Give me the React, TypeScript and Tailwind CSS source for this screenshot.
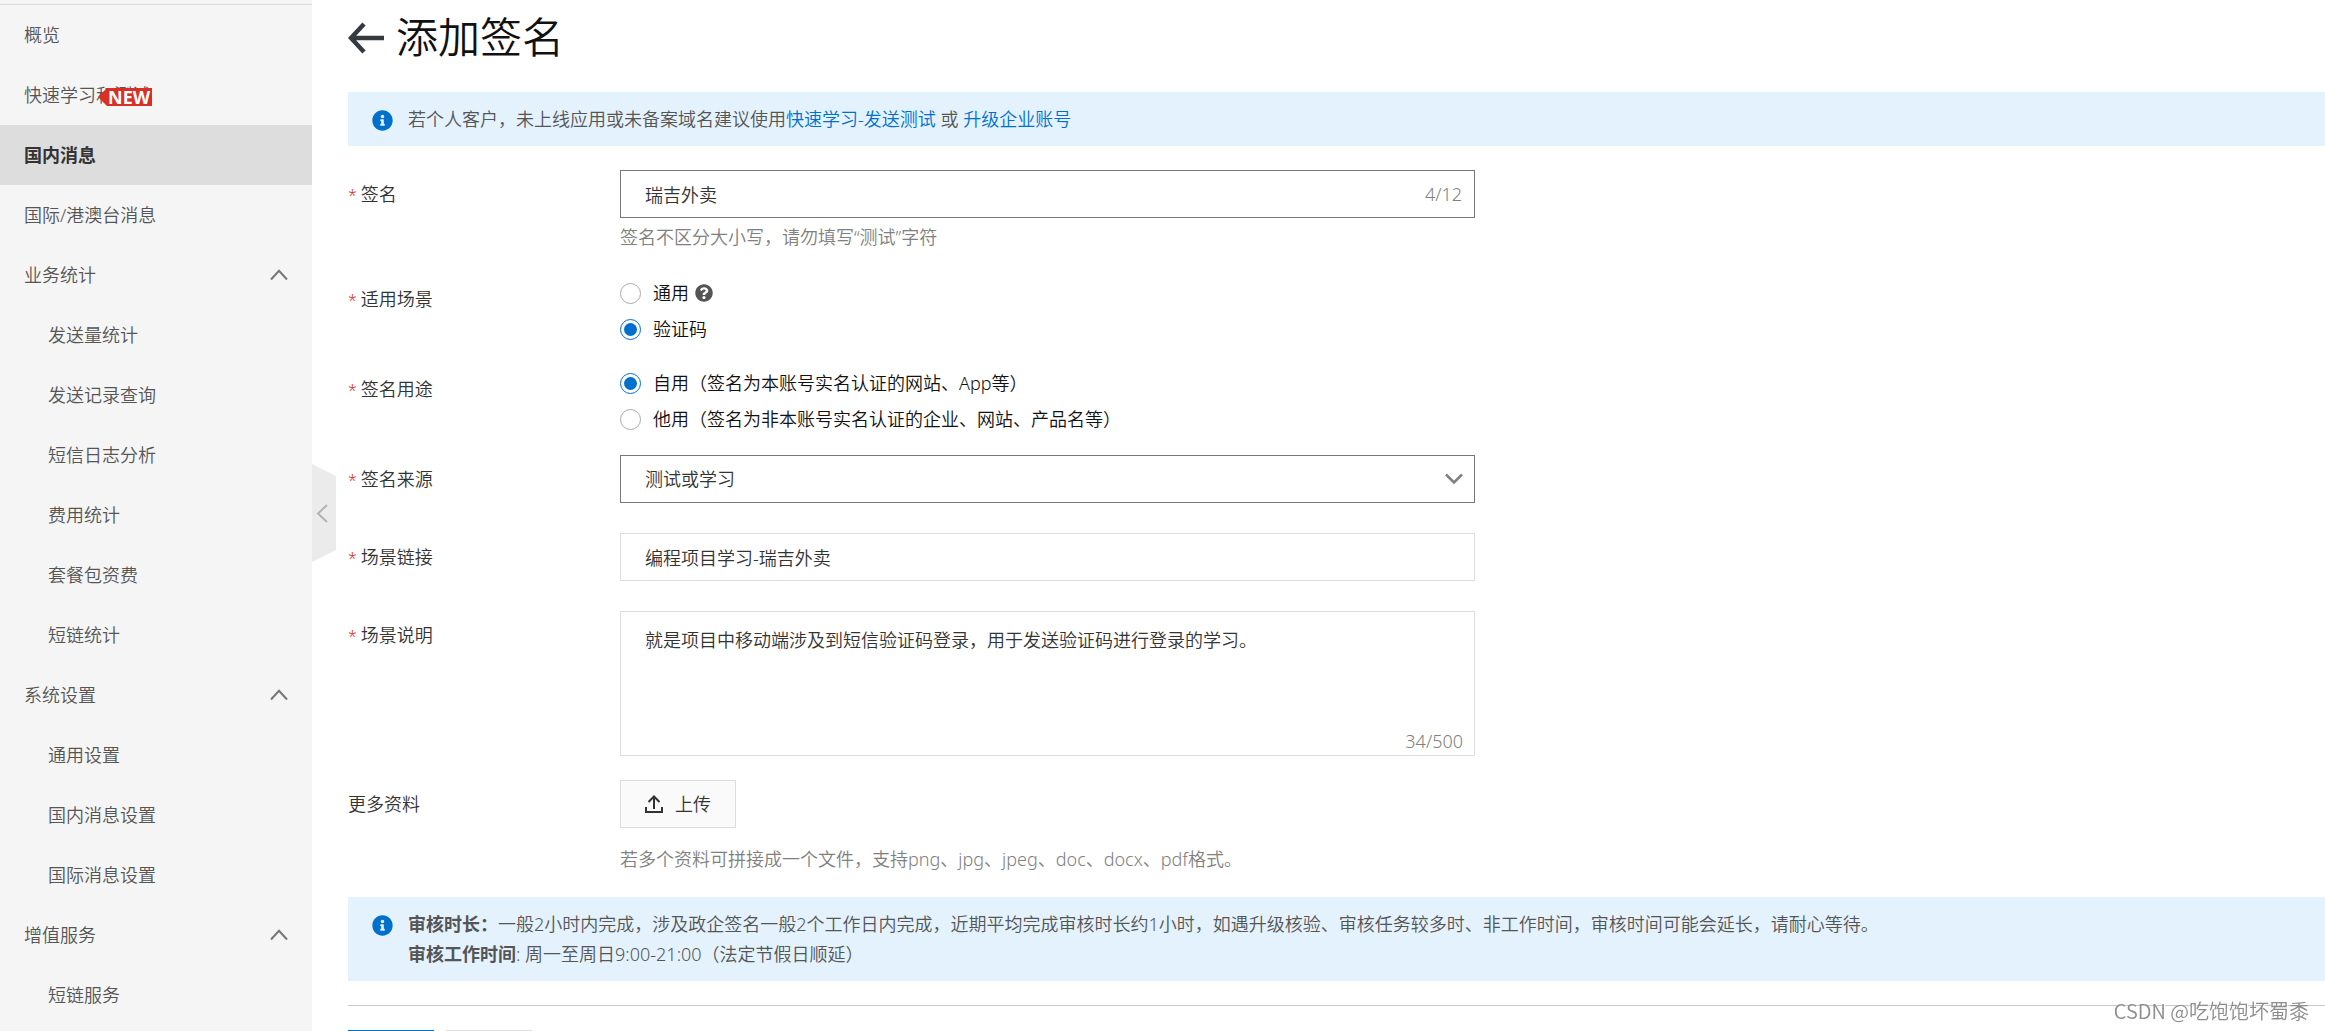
import React, { useState } from "react";
import { FaInfoCircle, FaQuestionCircle } from "react-icons/fa";

type NavEntry = {
  label: string;
  active?: boolean;
  badge?: boolean;
  children?: string[];
};

const NAV: NavEntry[] = [
  { label: "概览" },
  { label: "快速学习和测试", badge: true },
  { label: "国内消息", active: true },
  { label: "国际/港澳台消息" },
  {
    label: "业务统计",
    children: ["发送量统计", "发送记录查询", "短信日志分析", "费用统计", "套餐包资费", "短链统计"],
  },
  { label: "系统设置", children: ["通用设置", "国内消息设置", "国际消息设置"] },
  { label: "增值服务", children: ["短链服务"] },
];

function ChevronUp() {
  return (
    <svg width="18" height="12" viewBox="0 0 18 12" fill="none" stroke="#777" strokeWidth="2" aria-hidden="true">
      <path d="M1 10.5 9 1.8l8 8.7" />
    </svg>
  );
}

function NewBadge() {
  return (
    <span className="absolute left-[98px] top-[23px] flex">
      <svg width="10" height="18" viewBox="0 0 10 18" fill="#d93026" aria-hidden="true">
        <path d="M10 0H9L0 9l9 9h1z" />
      </svg>
      <span className="bg-[#d93026] pr-[2px] font-['Open_Sans','Noto_Sans_CJK_SC',sans-serif] text-lg font-bold leading-[18px] text-white">
        NEW
      </span>
    </span>
  );
}

function Sidebar() {
  return (
    <nav className="w-[312px] shrink-0 bg-[#f5f5f5] pt-1 text-[#555]" aria-label="主导航">
      <ul className="border-t border-[#d9d9d9]">
        {NAV.map((entry) => (
          <li key={entry.label}>
            {entry.children ? (
              <>
                <button type="button" className="flex h-[60px] w-full items-center justify-between px-6" aria-expanded="true">
                  {entry.label}
                  <ChevronUp />
                </button>
                <ul>
                  {entry.children.map((child) => (
                    <li key={child}>
                      <a href="#" className="flex h-[60px] items-center px-12">
                        {child}
                      </a>
                    </li>
                  ))}
                </ul>
              </>
            ) : (
              <a
                href="#"
                className={
                  entry.active
                    ? "flex h-[60px] items-center bg-[#ddd] px-6 font-bold text-[#333]"
                    : "relative flex h-[60px] items-center px-6"
                }
              >
                {entry.label}
                {entry.badge && <NewBadge />}
              </a>
            )}
          </li>
        ))}
      </ul>
    </nav>
  );
}

function Notice({ children }: { children: React.ReactNode }) {
  return (
    <div className="flex gap-[15px] bg-[#e4f2fe] px-6 py-3 text-[#555]">
      <FaInfoCircle className="mt-[6px] size-[21px] shrink-0 text-[#0070cc]" aria-hidden="true" />
      <div className="leading-[30px]">{children}</div>
    </div>
  );
}

function Row({
  label,
  htmlFor,
  required = true,
  className,
  children,
}: {
  label: string;
  htmlFor?: string;
  required?: boolean;
  className: string;
  children: React.ReactNode;
}) {
  const inner = (
    <>
      {required && <span className="mr-1 text-base text-[#d93026]">*</span>}
      {label}
    </>
  );
  return (
    <div className={className}>
      {htmlFor ? (
        <label htmlFor={htmlFor} className="w-[272px] shrink-0 leading-[48px]">
          {inner}
        </label>
      ) : (
        <span className="w-[272px] shrink-0 leading-[48px]">{inner}</span>
      )}
      <div className="max-w-[855px] flex-1">{children}</div>
    </div>
  );
}

function Radio({
  name,
  checked,
  onSelect,
  children,
}: {
  name: string;
  checked: boolean;
  onSelect: () => void;
  children: React.ReactNode;
}) {
  return (
    <label className="flex h-9 items-center gap-3 text-[#111]">
      <input
        type="radio"
        name={name}
        checked={checked}
        onChange={onSelect}
        className="grid size-[21px] shrink-0 appearance-none place-content-center rounded-full border border-[#aaa] before:size-[13px] before:rounded-full checked:border-[#0070cc] checked:before:bg-[#0070cc]"
      />
      <span className="flex items-center gap-[6px]">{children}</span>
    </label>
  );
}

export default function App() {
  const [scene, setScene] = useState("code");
  const [usage, setUsage] = useState("self");
  const [sign, setSign] = useState("瑞吉外卖");
  const [link, setLink] = useState("编程项目学习-瑞吉外卖");
  const [desc, setDesc] = useState("就是项目中移动端涉及到短信验证码登录，用于发送验证码进行登录的学习。");

  return (
    <div className="flex h-screen overflow-hidden bg-white font-['Noto_Sans','Noto_Sans_CJK_SC',sans-serif] text-lg font-[350] text-[#333]">
      <Sidebar />
      <div className="relative w-0">
        <button type="button" aria-label="收起导航" className="absolute left-0 top-[464px]">
          <svg width="24" height="98" viewBox="0 0 24 98" aria-hidden="true">
            <path d="M0 0 24 12V86L0 98z" fill="#ebebeb" />
            <path d="M15 41 6 49.500 15 58" fill="none" stroke="#b3b3b3" strokeWidth="2" />
          </svg>
        </button>
      </div>

      <main className="min-w-0 flex-1 pl-9">
        <div className="flex h-[92px] items-start gap-3 pt-2">
          <a href="#" aria-label="返回" className="flex h-[60px] items-center">
            <svg width="36" height="32" viewBox="0 0 36 32" fill="none" stroke="#333a40" strokeWidth="4.500" aria-hidden="true">
              <path d="M36 16H3M16 2 3 16l13 14" />
            </svg>
          </a>
          <h1 className="text-[42px] font-[350] leading-[58px] text-[#111]">添加签名</h1>
        </div>

        <Notice>
          若个人客户，未上线应用或未备案域名建议使用
          <a href="#" className="text-[#0070cc]">快速学习-发送测试</a> 或{" "}
          <a href="#" className="text-[#0070cc]">升级企业账号</a>
        </Notice>

        <form className="pt-6" onSubmit={(e) => e.preventDefault()}>
          <Row label="签名" htmlFor="sign" className="mb-[18px] flex">
            <div className="flex h-12 items-center border border-[#777] pl-6 pr-3">
              <input
                id="sign"
                value={sign}
                maxLength={12}
                onChange={(e) => setSign(e.target.value)}
                className="h-full min-w-0 flex-1 outline-none"
              />
              <span className="text-[#808080]">{sign.length}/12</span>
            </div>
            <p className="leading-[39px] text-[#808080]">签名不区分大小写，请勿填写“测试”字符</p>
          </Row>

          <Row label="适用场景" className="mb-[18px] flex">
            <Radio name="scene" checked={scene === "general"} onSelect={() => setScene("general")}>
              通用
              <FaQuestionCircle className="size-[18px] text-[#555]" aria-hidden="true" />
            </Radio>
            <Radio name="scene" checked={scene === "code"} onSelect={() => setScene("code")}>
              验证码
            </Radio>
          </Row>

          <Row label="签名用途" className="mb-[18px] flex">
            <Radio name="usage" checked={usage === "self"} onSelect={() => setUsage("self")}>
              自用（签名为本账号实名认证的网站、App等）
            </Radio>
            <Radio name="usage" checked={usage === "other"} onSelect={() => setUsage("other")}>
              他用（签名为非本账号实名认证的企业、网站、产品名等）
            </Radio>
          </Row>

          <Row label="签名来源" htmlFor="source" className="mb-[30px] flex">
            <div className="relative">
              <select id="source" className="h-12 w-full appearance-none border border-[#777] bg-white px-6 outline-none">
                <option>测试或学习</option>
              </select>
              <svg
                className="pointer-events-none absolute right-3 top-[18px]"
                width="18"
                height="12"
                viewBox="0 0 18 12"
                fill="none"
                stroke="#808080"
                strokeWidth="2.500"
                aria-hidden="true"
              >
                <path d="m1 1.500 8 8 8-8" />
              </svg>
            </div>
          </Row>

          <Row label="场景链接" htmlFor="link" className="mb-[30px] flex">
            <input
              id="link"
              value={link}
              onChange={(e) => setLink(e.target.value)}
              className="block h-12 w-full border border-[#ddd] px-6 outline-none"
            />
          </Row>

          <Row label="场景说明" htmlFor="desc" className="mb-6 flex">
            <div className="relative">
              <textarea
                id="desc"
                value={desc}
                maxLength={500}
                onChange={(e) => setDesc(e.target.value)}
                className="block h-[145px] w-full resize-none border border-[#ddd] px-6 py-[15px] leading-[27px] outline-none"
              />
              <span className="absolute bottom-0 right-3 leading-[30px] text-[#808080]">{desc.length}/500</span>
            </div>
          </Row>

          <Row label="更多资料" required={false} className="mb-[18px] flex">
            <button type="button" className="flex h-12 items-center gap-3 border border-[#ddd] bg-[#fafafa] px-6">
              <svg width="18" height="18" viewBox="0 0 18 18" fill="none" stroke="#333" strokeWidth="2" aria-hidden="true">
                <path d="M9 14V1.500M3.500 7 9 1.500 14.500 7M1 12v5h16v-5" />
              </svg>
              上传
            </button>
            <p className="mt-3 leading-[39px] text-[#808080]">
              若多个资料可拼接成一个文件，支持png、jpg、jpeg、doc、docx、pdf格式。
            </p>
          </Row>

          <Notice>
            <p>
              <strong className="font-bold">审核时长：</strong>
              一般2小时内完成，涉及政企签名一般2个工作日内完成，近期平均完成审核时长约1小时，如遇升级核验、审核任务较多时、非工作时间，审核时间可能会延长，请耐心等待。
            </p>
            <p>
              <strong className="font-bold">审核工作时间</strong>: 周一至周日9:00-21:00（法定节假日顺延）
            </p>
          </Notice>

          <div className="mt-6 flex gap-3 border-t border-[#c8c8c8] pt-6">
            <button type="submit" className="h-12 w-[86px] border border-[#0070cc] bg-[#0070cc] text-white">
              确定
            </button>
            <button type="button" className="h-12 w-[86px] border border-[#ddd] bg-[#fafafa]">
              取消
            </button>
          </div>
        </form>
      </main>

      <p className="fixed bottom-[6px] right-4 font-['Noto_Sans_CJK_SC',sans-serif] text-xl leading-7 text-[#8c8c8c] [text-shadow:1px_1px_0_#fff]">
        CSDN @吃饱饱坏蜀黍
      </p>
    </div>
  );
}
